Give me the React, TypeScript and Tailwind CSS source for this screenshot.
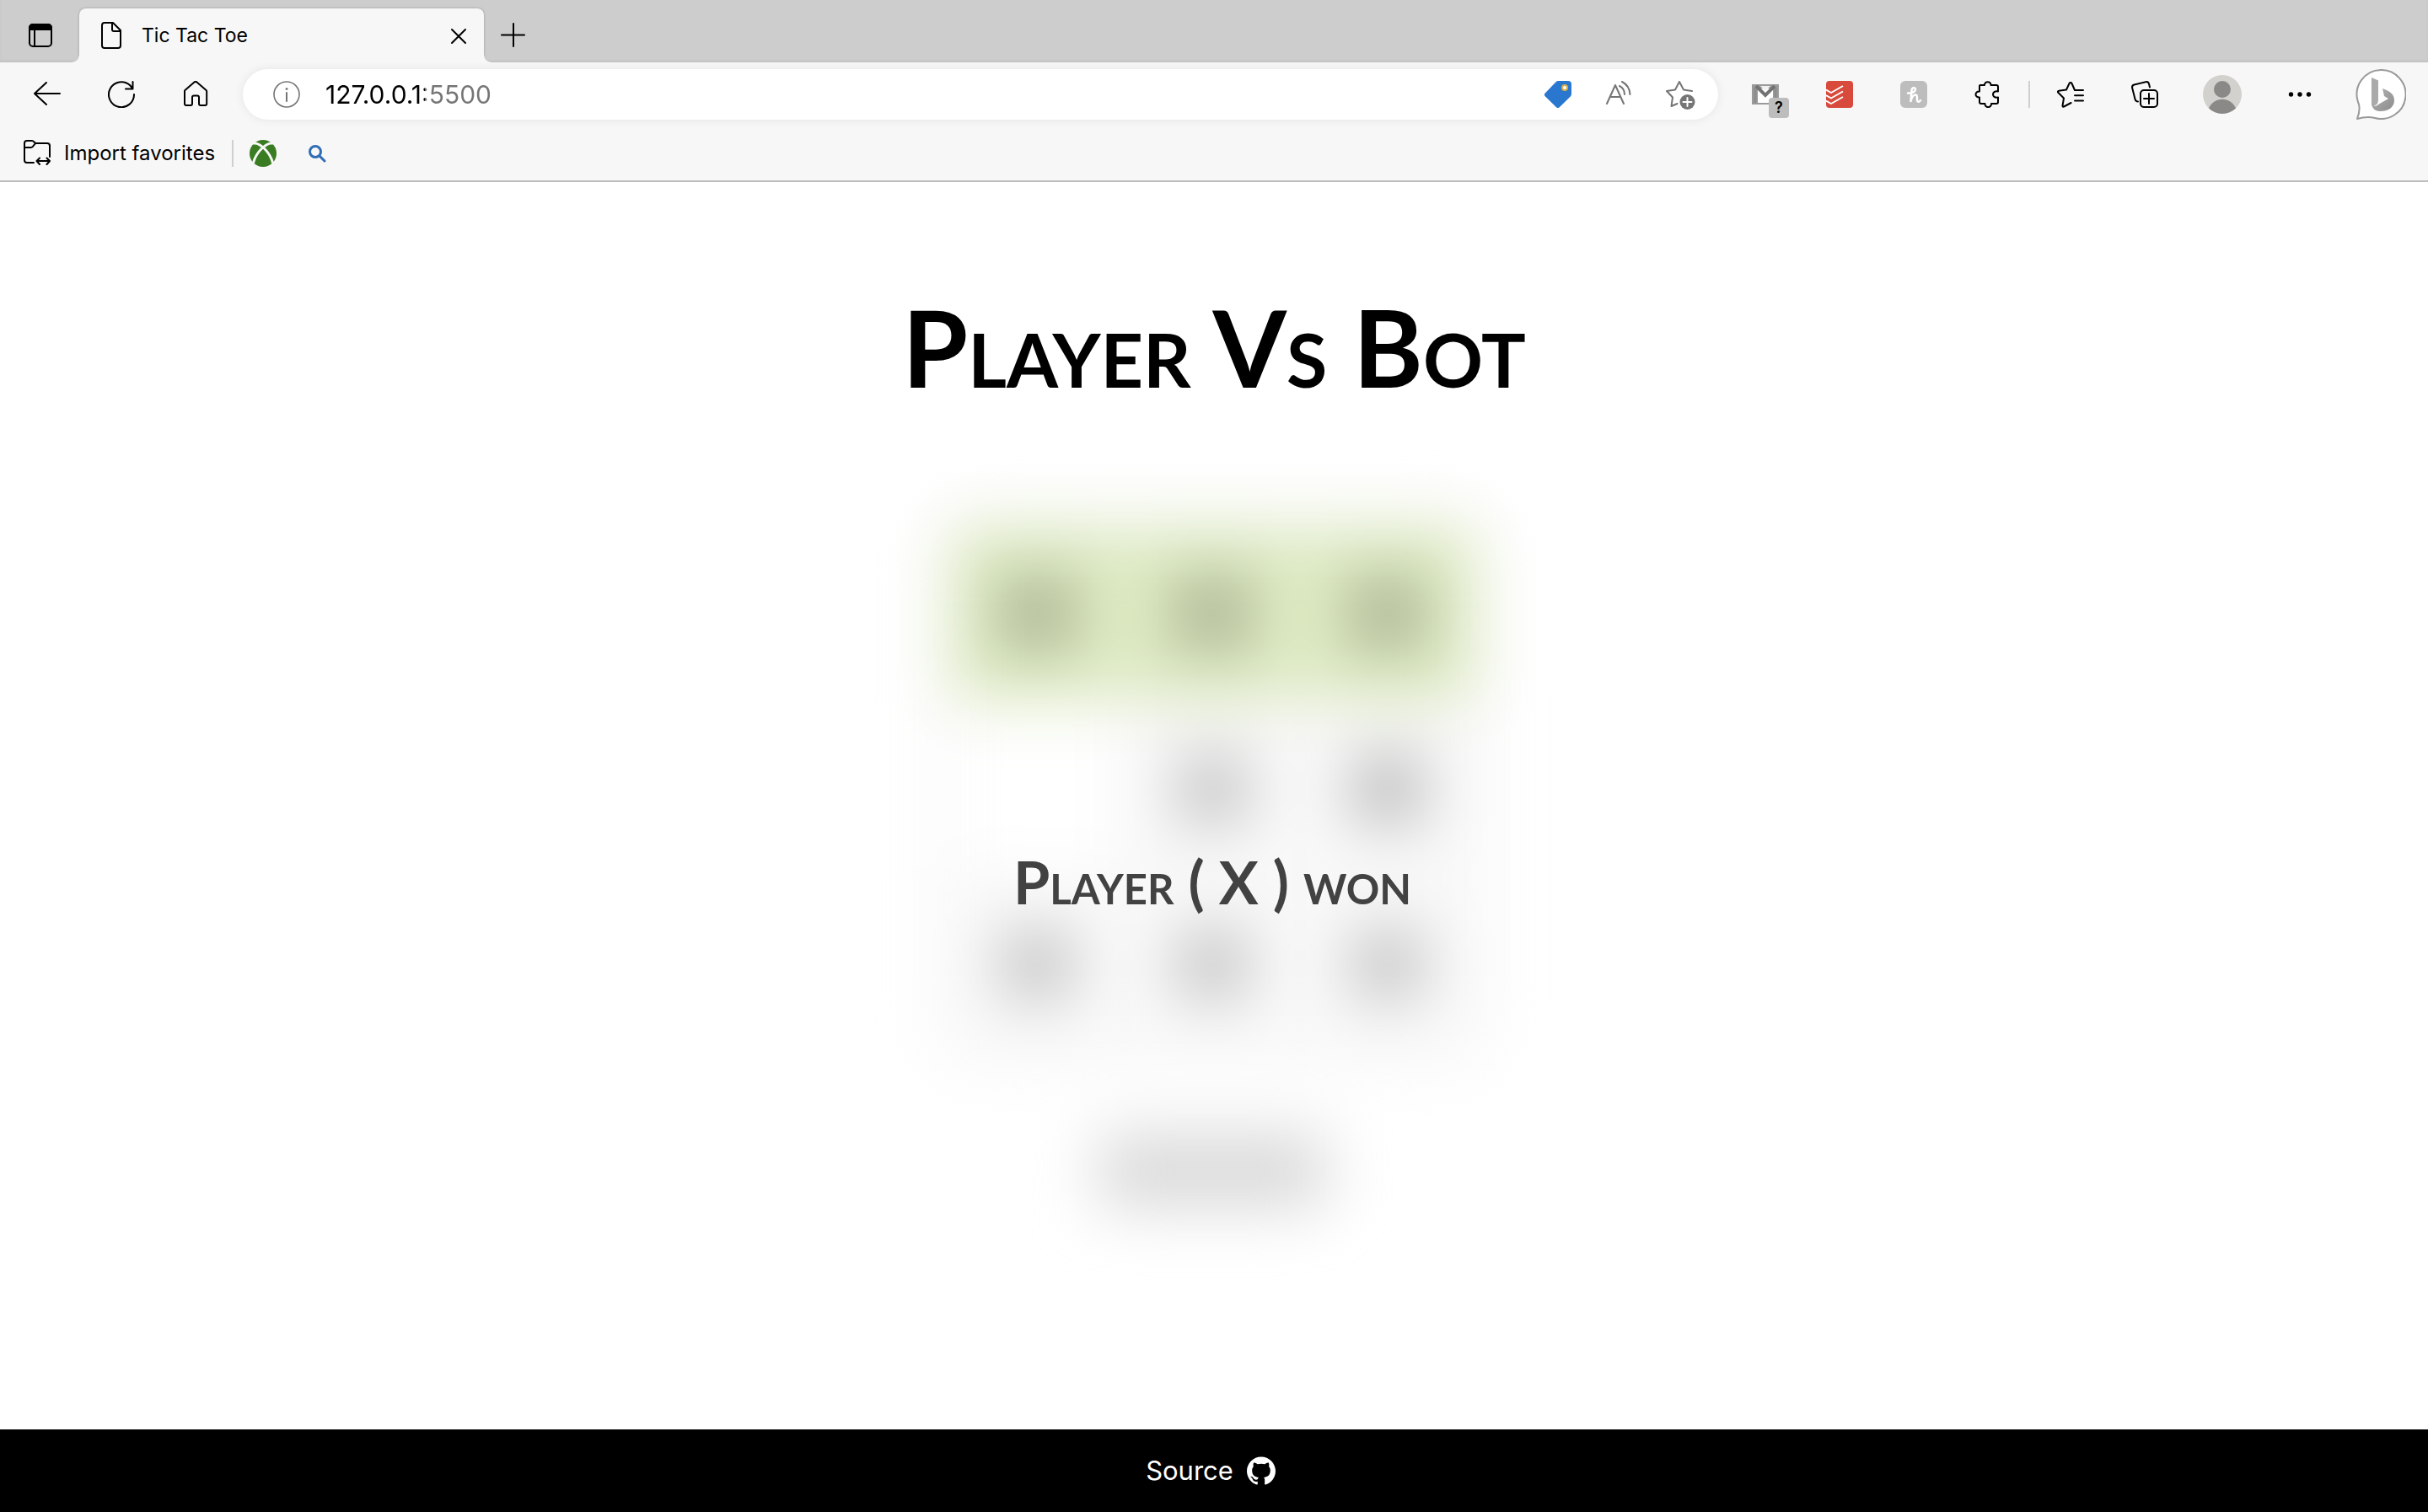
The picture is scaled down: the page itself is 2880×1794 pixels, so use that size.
import React from "react";
import { SiGithub } from "react-icons/si";

type IconProps = { children: React.ReactNode; className?: string; box?: string };

function Icon({ children, className = "size-8", box = "0 0 32 32" }: IconProps) {
  return (
    <svg
      viewBox={box}
      className={className}
      fill="none"
      stroke="currentColor"
      strokeWidth="2"
      strokeLinecap="round"
      strokeLinejoin="round"
      aria-hidden="true"
    >
      {children}
    </svg>
  );
}

function IconButton({ label, children, className = "" }: { label: string; children: React.ReactNode; className?: string }) {
  return (
    <button type="button" aria-label={label} className={`shrink-0 ${className}`}>
      {children}
    </button>
  );
}

function TabStrip() {
  return (
    <div className="flex h-[74px] items-end bg-[#cdcdcd] shadow-[inset_0_-2px_2px_#c2c2c2]">
      <IconButton label="Tab actions" className="mb-4 ml-8 mr-[30px]">
        <Icon>
          <rect x="3" y="3" width="26" height="26" rx="4" />
          <path d="M3 9V7a4 4 0 0 1 4-4h18a4 4 0 0 1 4 4v2z" fill="currentColor" />
          <path d="M9 9v20" />
        </Icon>
      </IconButton>
      <div className="relative flex h-16 w-[480px] items-center rounded-t-[8px] bg-[#f7f7f7] pl-[22px] pr-[14px] shadow-[0_0_3px_#9a9a9a] [clip-path:inset(-4px_-8px_0_-8px)] before:absolute before:bottom-0 before:-left-2 before:size-2 before:bg-[radial-gradient(circle_at_top_left,transparent_7px,#f7f7f7_8px)] before:content-[''] after:absolute after:bottom-0 after:-right-2 after:size-2 after:bg-[radial-gradient(circle_at_top_right,transparent_7px,#f7f7f7_8px)] after:content-['']">
        <Icon className="mr-5 size-8">
          <path d="M8 1h10l9 9v18a3 3 0 0 1-3 3H8a3 3 0 0 1-3-3V4a3 3 0 0 1 3-3zM17 1v8a2 2 0 0 0 2 2h8" />
        </Icon>
        <span className="flex-1 text-[23px]">Tic Tac Toe</span>
        <IconButton label="Close tab">
          <Icon>
            <path d="M8 9l16 16M24 9L8 25" />
          </Icon>
        </IconButton>
      </div>
      <IconButton label="New tab" className="mb-4 ml-[19px]">
        <Icon>
          <path d="M16 2v27M2 15.500h27" />
        </Icon>
      </IconButton>
    </div>
  );
}

function AddressBar() {
  return (
    <div className="flex h-[60px] min-w-0 flex-1 items-center rounded-full bg-white pl-9 pr-[26px] text-[#757575] shadow-[0_0_12px_rgba(0,0,0,0.08)]">
      <IconButton label="Site information" className="mr-[30px]">
        <Icon>
          <circle cx="16" cy="16" r="15" strokeWidth="1.600" />
          <path d="M16 14v10" />
          <circle cx="16" cy="9.500" r="1" fill="currentColor" strokeWidth="1" />
        </Icon>
      </IconButton>
      <input
        aria-label="Address"
        defaultValue="127.0.0.1:5500"
        className="min-w-0 flex-1 bg-[linear-gradient(to_right,#000_118px,#757575_118px)] bg-clip-text text-[30px] leading-10 text-transparent outline-none"
      />
      <div className="flex items-center gap-10">
        <IconButton label="Shopping">
          <Icon>
            <path
              d="M16.500 0H28a4 4 0 0 1 4 4v11.500a4 4 0 0 1-1.200 2.900L18 31a3 3 0 0 1-4.200 0L1 18.500a3 3 0 0 1 0-4.300L13.600 1.200A4 4 0 0 1 16.500 0z"
              fill="#2977cf"
              stroke="none"
            />
            <circle cx="24" cy="8" r="3" fill="#fff" stroke="#d8b04a" />
          </Icon>
        </IconButton>
        <IconButton label="Read aloud">
          <Icon>
            <path d="M2 27L12 5l10 22M6 19h12M17 6c4 2 6 6 6 10M20 1c6 3 9 8 9.500 15" />
          </Icon>
        </IconButton>
        <IconButton label="Add to favorites">
          <Icon className="h-9 w-9" box="0 0 36 36">
            <path d="M31 14l-10-1.500L16 3l-5 9.500L1 14l7 7.500L6.500 32l7-3" />
            <circle cx="25.500" cy="27" r="9" fill="currentColor" stroke="none" />
            <path d="M25.500 22v10M20.500 27h10" stroke="#fff" />
          </Icon>
        </IconButton>
      </div>
    </div>
  );
}

function Toolbar() {
  return (
    <div className="flex h-[76px] items-center bg-[#f7f7f7] pl-10 pr-[26px]">
      <div className="mr-10 flex items-center gap-14">
        <IconButton label="Back">
          <Icon>
            <path d="M31 15H1M15 2L1 15l14 13" />
          </Icon>
        </IconButton>
        <IconButton label="Refresh">
          <Icon>
            <path d="M31 16A15 15 0 1 1 26 5l3 3.500M29.500 1v8.500H21" />
          </Icon>
        </IconButton>
        <IconButton label="Home">
          <Icon>
            <path d="M14.500 1.600a2 2 0 0 1 3 0L28.500 11a2 2 0 0 1 .700 1.500V27a2 2 0 0 1-2 2H22a2 2 0 0 1-2-2v-7.500a2 2 0 0 0-2-2h-4a2 2 0 0 0-2 2V27a2 2 0 0 1-2 2H5a2 2 0 0 1-2-2V12.500A2 2 0 0 1 3.500 11z" />
          </Icon>
        </IconButton>
      </div>
      <AddressBar />
      <div className="ml-10 flex items-center gap-14">
        <button type="button" aria-label="Gmail checker" className="relative size-8 shrink-0">
          <Icon>
            <rect x="0" y="4" width="32" height="24" fill="#9a9a9a" stroke="none" />
            <path d="M7 9h18v17H7z" fill="#fff" stroke="none" />
            <path d="M4 8v18M28 8v18" stroke="#8d8d8d" strokeWidth="3" strokeLinecap="butt" />
            <path d="M5 6l11 11L27 6" stroke="#737373" strokeWidth="4" strokeLinecap="butt" strokeLinejoin="miter" />
            <path d="M10 6h12l-6 6z" fill="#f2f2f2" stroke="none" />
          </Icon>
          <span className="absolute left-5 top-5 flex size-6 items-center justify-center rounded bg-[#bdbdbd] text-lg font-semibold">?</span>
        </button>
        <IconButton label="Todoist">
          <Icon>
            <rect width="32" height="32" rx="4" fill="#d84b3c" stroke="none" />
            <path d="M0 10.500l6 3.500L20 6M0 17l6 3.500L20 12.500M0 23.500L6 27l14-8" stroke="#fff" strokeWidth="2" strokeLinecap="butt" />
          </Icon>
        </IconButton>
        <IconButton label="Honey">
          <Icon>
            <rect width="32" height="32" rx="6" fill="#bdbdbd" stroke="none" />
            <path d="M9 14.500c5 .500 9-2 9-4.500s-4-2.500-4.500 1L12.500 24c1-5 3.500-8 6-7.500 3 .500 0 7 2.500 8 1.500.500 2.500-.500 3-1.500" stroke="#fff" strokeWidth="2.500" />
          </Icon>
        </IconButton>
        <IconButton label="Extensions">
          <Icon>
            <path d="M7 5h5c-.500-5 8-5 7.500 0H26a2 2 0 0 1 2 2v5.500c-8-1.500-8 8.500 0 7V25a2 2 0 0 1-2 2h-6c.500 5.500-8 5.500-7.500 0H8a2 2 0 0 1-2-2v-5.500c-6 .500-6-7.500 0-7V6a1 1 0 0 1 1-1z" />
          </Icon>
        </IconButton>
      </div>
      <div className="mx-8 h-8 w-[2px] shrink-0 bg-[#cfcfcf]" />
      <div className="flex items-center gap-[52px]">
        <IconButton label="Favorites">
          <Icon>
            <path d="M31 11H21L17.500 3a1.700 1.700 0 0 0-3 0L11 10.500l-9 1.200a1.200 1.200 0 0 0-.700 2.100L8 20.500 6.500 29.500c0 1 .800 1.500 1.600 1l8.500-4.500M21 17.300h10M21 23.500h10" />
          </Icon>
        </IconButton>
        <IconButton label="Collections" className="ml-1">
          <Icon>
            <rect x="11" y="11" width="20" height="20" rx="4" />
            <path d="M21 15v12M15 21h12M8 24.500c-2 0-3-1-3.500-3L1.200 8.500c-.500-2 .500-3.500 2.300-4L17 1.200c2-.500 3.500.500 4 2.300l1 4" />
          </Icon>
        </IconButton>
        <IconButton label="Profile">
          <Icon className="size-12" box="0 0 48 48">
            <circle cx="24" cy="24" r="23" fill="#d2d1cd" stroke="none" />
            <circle cx="24" cy="18" r="10" fill="#8a8987" stroke="none" />
            <path d="M8 40.500C14 26 34 26 40 40.500 31 49 17 49 8 40.500z" fill="#8a8987" stroke="none" />
          </Icon>
        </IconButton>
        <IconButton label="Settings and more">
          <Icon>
            <g fill="currentColor" stroke="none">
              <circle cx="5.500" cy="16" r="2.700" />
              <circle cx="16" cy="16" r="2.700" />
              <circle cx="26.500" cy="16" r="2.700" />
            </g>
          </Icon>
        </IconButton>
      </div>
      <IconButton label="Bing chat" className="ml-[50px]">
        <Icon className="size-[60px]" box="0 0 60 60">
          <defs>
            <linearGradient id="bing" x1="0" y1="0" x2="1" y2="1">
              <stop offset="0" stopColor="#b5b5b5" />
              <stop offset="1" stopColor="#8c8c8c" />
            </linearGradient>
          </defs>
          <path d="M30 1a29 29 0 1 1-7 57c-8-2-14-1-21 1 3-8 4-14 1-20A29 29 0 0 1 30 1z" fill="#fff" stroke="#999" />
          <path d="M19 10l8 3.500V36c0 6-3 8-8 7z" fill="#aaa" stroke="none" />
          <path d="M19 40c2 5 6 4 8 2l12-7-5-3-2-9c9 3 14 7 14 14 0 9-8 13-17 13-6 0-10-4-10-10z" fill="url(#bing)" stroke="none" />
        </Icon>
      </IconButton>
    </div>
  );
}

function FavoritesBar() {
  return (
    <div className="flex h-[66px] items-center border-b-2 border-[#bdbdbd] bg-[#f7f7f7] pl-7">
      <button type="button" className="flex items-center gap-4 text-2xl">
        <Icon>
          <path d="M12 27H4a3 3 0 0 1-3-3V4a3 3 0 0 1 3-3h6c2 0 3 3 5 3h13a3 3 0 0 1 3 3v13M1 9h8c3 0 3-5 6-5M16 25h15M19 21.500L15.500 25l3.500 4M27.500 21.500L31 25l-3.500 4" />
        </Icon>
        Import favorites
      </button>
      <div className="ml-5 mr-[19px] h-8 w-[2px] bg-[#cfcfcf]" />
      <a href="#xbox" aria-label="Xbox" className="mr-9">
        <Icon>
          <circle cx="16" cy="16" r="16" fill="#3a7c22" stroke="none" />
          <path d="M5 4C12 3 24 14 27.500 27M27 4C20 3 8 14 4.500 27" stroke="#f7f7f7" strokeWidth="3" />
        </Icon>
      </a>
      <a href="#search" aria-label="Search" className="text-[#2f6db5]">
        <Icon className="size-6" box="0 0 24 24">
          <circle cx="10" cy="10" r="6.500" strokeWidth="3" />
          <path d="M15 15l6 6" strokeWidth="3" />
        </Icon>
      </a>
    </div>
  );
}

const cells = ["win", "win", "win", "empty", "mark", "heavy", "mark", "mark", "mark"];

function Cell({ kind }: { kind: string }) {
  const fill = kind === "win" ? "bg-[#dbe9bd]" : kind === "empty" ? "bg-white" : "bg-[#f9f9f9]";
  const ink =
    kind === "win" ? "bg-[#a3aa8e]" : kind === "heavy" ? "bg-[#b4b4b4]" : "bg-[#bebebe]";
  return (
    <button type="button" aria-label="Square" className={`flex size-[200px] items-center justify-center ${fill}`}>
      {kind !== "empty" && <span className={`size-20 rounded-2xl ${ink}`} />}
    </button>
  );
}

function Game() {
  return (
    <main className="flex flex-1 flex-col items-center bg-white pt-[126px]">
      <h1 className="font-[Lato] text-[126px] leading-[140px] font-bold [font-variant-caps:small-caps]">Player Vs Bot</h1>
      <div className="relative mt-[146px] flex flex-col items-center pr-1">
        <div className="flex flex-col items-center gap-[102px] blur-[38px]">
          <div className="grid grid-cols-3 gap-2 bg-[#f3f3f3] shadow-[0_0_40px_10px_#f0f0f0]">
            {cells.map((kind, i) => (
              <Cell key={i} kind={kind} />
            ))}
          </div>
          <button type="button" aria-label="Restart" className="h-[86px] w-[270px] rounded-lg bg-[#d8d8d8]" />
        </div>
        <p className="absolute top-[378px] font-[Lato] text-[70px] leading-[80px] font-bold whitespace-nowrap text-[#424242] [font-variant-caps:small-caps]">
          Player ( X ) won
        </p>
      </div>
    </main>
  );
}

export default function App() {
  return (
    <div className="flex min-h-screen flex-col bg-white font-[Inter,sans-serif] text-black">
      <header>
        <TabStrip />
        <Toolbar />
        <FavoritesBar />
      </header>
      <Game />
      <footer className="flex h-[98px] items-center justify-center bg-black pr-2">
        <a href="#source" className="flex items-center gap-4 text-[31px] text-white">
          Source
          <SiGithub className="size-[34px]" aria-hidden="true" />
        </a>
      </footer>
    </div>
  );
}
